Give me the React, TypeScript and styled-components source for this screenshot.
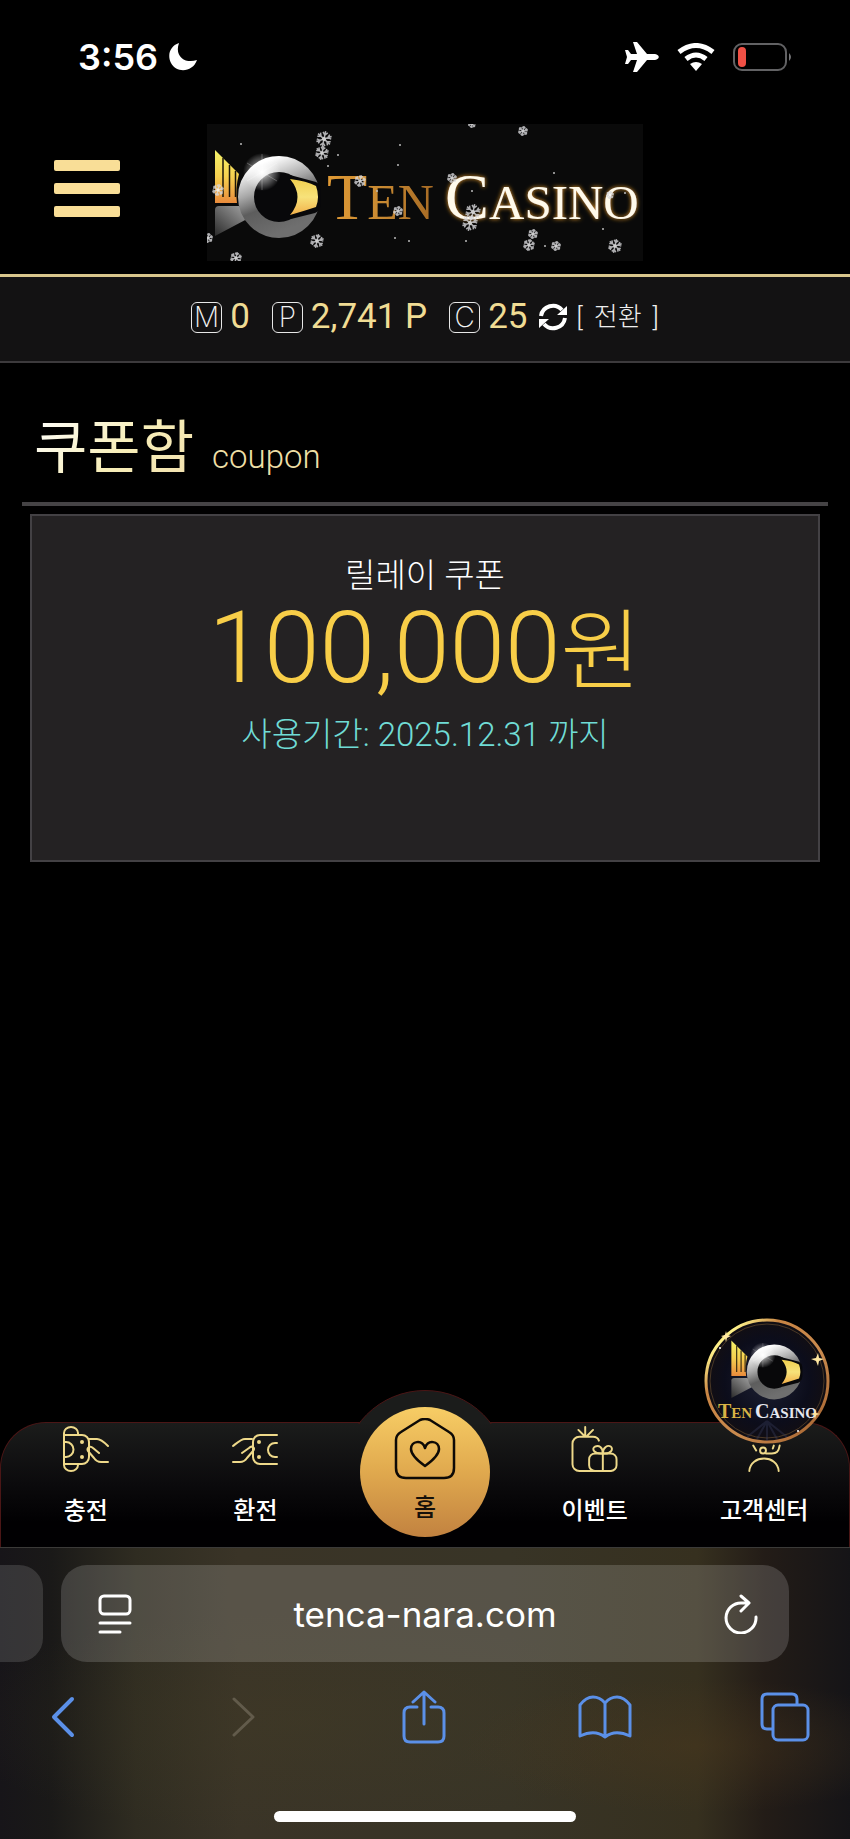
import React from "react";
import styled, { createGlobalStyle } from "styled-components";

const GlobalStyle = createGlobalStyle`
  *, *::before, *::after { box-sizing: border-box; }
  body {
    margin: 0;
    background: #000;
    color: #fff;
    font-family: Roboto, "Noto Sans CJK KR", sans-serif;
  }
  button, input { font: inherit; color: inherit; }
  svg { display: block; }
`;

const GOLD = "#eed98a";
const BLUE = "#5b90e8";

const Screen = styled.div`
  display: flex;
  flex-direction: column;
  min-height: 100vh;
  overflow: hidden;
`;

const StatusBar = styled.div`
  display: flex;
  align-items: center;
  justify-content: space-between;
  height: 114px;
  padding: 0 57px 0 78px;
  font: 600 36px/40px Inter, sans-serif;
`;

const StatusGroup = styled.div<{ $gap: number }>`
  display: flex;
  align-items: center;
  gap: ${(p) => p.$gap}px;
`;

const Header = styled.header`
  display: grid;
  grid-template-columns: 1fr auto 1fr;
  align-items: center;
  padding: 10px 54px 13px;
  border-bottom: 3px solid #d8c58c;
`;

const BareButton = styled.button`
  display: flex;
  align-items: center;
  justify-content: center;
  padding: 0;
  border: 0;
  background: none;
  cursor: pointer;
`;

const MenuButton = styled(BareButton)`
  flex-direction: column;
  gap: 12px;
  width: 66px;
  padding-bottom: 8px;
`;

const MenuBar = styled.span`
  width: 100%;
  height: 11px;
  border-radius: 2px;
  background: #f9de97;
`;

const LogoLink = styled.a`
  display: block;
  background: #0a0a0a;
`;

const Wallet = styled.section`
  display: flex;
  align-items: center;
  justify-content: center;
  height: 86px;
  padding-bottom: 4px;
  background: #131213;
  border-bottom: 2px solid #3c3a3c;
`;

const Balance = styled.div`
  display: flex;
  align-items: center;
  gap: 8px;
  margin-right: 22px;
  color: #f0dc94;
  font-size: 35px;
  line-height: 40px;
  &:last-of-type { margin-right: 11px; }
`;

const Mark = styled.span`
  display: flex;
  align-items: center;
  justify-content: center;
  width: 31px;
  height: 31px;
  border: 1px solid #e8e8e8;
  border-radius: 6px;
  color: #f4f4f4;
  font: 200 28px/28px Inter, sans-serif;
`;

const Exchange = styled(BareButton)`
  gap: 11px;
  margin-left: 10px;
  color: #eee;
  font-size: 26px;
  font-weight: 300;
  line-height: 32px;
`;

const Content = styled.main`
  flex: 1;
  padding: 51px 22px 0;
`;

const Title = styled.h1`
  display: flex;
  align-items: baseline;
  gap: 18px;
  margin: 0;
  padding: 0 12px 11px;
  border-bottom: 4px solid #454345;
  font-size: 58px;
  font-weight: 400;
  line-height: 68px;
`;

const GoldText = styled.span`
  background: linear-gradient(135deg, #ffffff 0%, #f7eeb8 55%, #f2e0ae 100%);
  background-clip: text;
  color: transparent;
`;

const Subtitle = styled.span`
  color: #eedfa6;
  font-size: 33px;
  font-weight: 300;
`;

const CouponCard = styled.article`
  display: flex;
  flex-direction: column;
  align-items: center;
  min-height: 348px;
  margin: 8px 8px 0;
  padding-top: 40px;
  border: 2px solid #434144;
  background: #242223;
  font-weight: 300;
`;

const CouponName = styled.h2`
  margin: 0;
  font-size: 33px;
  font-weight: 300;
  line-height: 40px;
`;

const Amount = styled.p`
  margin: 0;
  color: #f8ce48;
  font-size: 100px;
  font-weight: 300;
  line-height: 104px;
`;

const Won = styled.span`
  font-size: 88px;
`;

const Period = styled.p`
  margin: 11px 0 0;
  color: #70dcd5;
  font-size: 33px;
  line-height: 40px;
`;

const BottomNav = styled.nav`
  position: relative;
  display: grid;
  grid-template-columns: repeat(5, 1fr);
  height: 125px;
  border: 1px solid #4b1616;
  border-bottom: 0;
  border-radius: 46px 46px 0 0;
  background: linear-gradient(#1b1c1b, #0b0a0c 50%, #010002 80%);

  &::before {
    content: "";
    position: absolute;
    top: -33px;
    left: calc(50% - 83px);
    width: 166px;
    height: 166px;
    border: 1px solid #4b1616;
    border-radius: 50%;
    background: #1b1c1b;
    clip-path: inset(0 0 132px 0);
  }
`;

const NavLink = styled.a`
  display: flex;
  flex-direction: column;
  align-items: center;
  gap: 23px;
  padding-top: 3px;
  color: #fff;
  font-size: 24px;
  font-weight: 500;
  line-height: 32px;
  text-decoration: none;
`;

const HomeLink = styled(NavLink)`
  position: relative;
  justify-self: center;
  gap: 12px;
  width: 130px;
  height: 130px;
  margin-top: -16px;
  padding-top: 11px;
  border-radius: 50%;
  background: linear-gradient(#f7cd65, #e0a94e 50%, #c28240);
  color: #15100a;
`;

const ChatLink = styled.a`
  position: absolute;
  right: 18px;
  bottom: 102px;
`;

const Browser = styled.footer`
  display: flex;
  flex-direction: column;
  align-items: center;
  height: 292px;
  border-top: 1px solid #3b3a38;
  background:
    radial-gradient(ellipse at 82% 68%, #4a381d80, transparent 24%),
    radial-gradient(ellipse at 35% 60%, #453e2550, transparent 45%),
    linear-gradient(90deg, #171519, #1a1918 6%, #2f2c21 16%, #3a3427 28%, #383426 60%, #36301f 82%, #231c17 90%, #151417);
`;

const TabStrip = styled.div`
  display: flex;
  gap: 18px;
  width: 100%;
  height: 97px;
  margin-top: 17px;
  padding-right: 61px;
`;

const TabEdge = styled.div`
  width: 43px;
  border-radius: 0 24px 24px 0;
  background: #ffffff22;
`;

const AddressBar = styled.div`
  display: flex;
  flex: 1;
  align-items: center;
  padding: 0 31px 0 37px;
  border-radius: 26px;
  background: #ffffff28;
`;

const AddressInput = styled.input`
  flex: 1;
  min-width: 0;
  padding: 0 6px 0 0;
  border: 0;
  background: none;
  outline: 0;
  font: 400 35px/40px Inter, sans-serif;
  text-align: center;
`;

const Toolbar = styled.div`
  display: flex;
  align-items: center;
  justify-content: space-between;
  width: 100%;
  margin-top: 28px;
  padding: 0 38px 0 36px;
`;

const ToolButton = styled(BareButton)`
  width: 54px;
`;

const HomeIndicator = styled.div`
  width: 302px;
  height: 11px;
  margin: auto 0 17px;
  border-radius: 6px;
  background: #fff;
`;

const flakes = [
  [117, 15, 8], [115, 29, 7], [153, 57, 6], [191, 87, 5], [266, 88, 8], [263, 99, 8],
  [316, 7, 5], [110, 117, 7], [29, 134, 6], [11, 66, 6], [245, 54, 5], [403, 71, 4],
  [326, 110, 5], [322, 121, 6], [349, 122, 5], [408, 122, 7], [265, 0, 4], [1, 114, 5],
];
const sparks = [
  [34, 20], [193, 21], [191, 41], [121, 42], [131, 31], [98, 44], [265, 67], [347, 49],
  [396, 105], [259, 117], [188, 114], [202, 117], [338, 122], [418, 69], [170, 67],
];

const Flake = ({ x, y, r }: { x: number; y: number; r: number }) => (
  <g transform={`translate(${x} ${y}) rotate(12)`} stroke="#d9d9dc" strokeWidth="1.5" opacity=".8">
    {[0, 60, 120].map((a) => (
      <path key={a} transform={`rotate(${a})`}
        d={`M0 ${-r}V${r}M${-r * 0.3} ${-r * 0.85}L0 ${-r * 0.5}L${r * 0.3} ${-r * 0.85}M${-r * 0.3} ${r * 0.85}L0 ${r * 0.5}L${r * 0.3} ${r * 0.85}`} fill="none" />
    ))}
    <circle r={r * 0.25} fill="#fff" stroke="none" />
  </g>
);

const Emblem = ({ id }: { id: string }) => (
  <g>
    <defs>
      <linearGradient id={`${id}-ring`} x1=".2" y1="0" x2=".6" y2="1">
        <stop offset="0" stopColor="#fff" />
        <stop offset=".35" stopColor="#a9a9a9" />
        <stop offset=".6" stopColor="#5d5d5d" />
        <stop offset="1" stopColor="#6f6f6f" />
      </linearGradient>
      <linearGradient id={`${id}-wing`} x1="0" y1="0" x2="0" y2="1">
        <stop offset="0" stopColor="#f3f26a" />
        <stop offset=".5" stopColor="#f6d04f" />
        <stop offset="1" stopColor="#e98b3c" />
      </linearGradient>
      <linearGradient id={`${id}-tail`} x1="0" y1="1" x2="1" y2="0">
        <stop offset="0" stopColor="#2b2b2b" />
        <stop offset="1" stopColor="#a8a8a8" />
      </linearGradient>
      <linearGradient id={`${id}-eye`} x1="0" y1="0" x2="0" y2="1">
        <stop offset="0" stopColor="#f0cf4f" />
        <stop offset=".5" stopColor="#f7e27a" />
        <stop offset="1" stopColor="#f2b04a" />
      </linearGradient>
      <radialGradient id={`${id}-glow`}>
        <stop offset="0" stopColor="#fff" />
        <stop offset=".4" stopColor="#fff" stopOpacity=".5" />
        <stop offset="1" stopColor="#fff" stopOpacity="0" />
      </radialGradient>
    </defs>
    <path d="M8 112V86q0-4 4-4h20l10 12z" fill={`url(#${id}-tail)`} />
    <path d="M8 26L32 50Q28 64 30 79H8z" fill={`url(#${id}-wing)`} />
    <path d="M16 34V73M22.5 41V73M28.5 47V73" stroke="#191408" strokeWidth="1.5" />
    <circle cx="72" cy="73" r="33" fill="#08080a" stroke={`url(#${id}-ring)`} strokeWidth="16" />
    <path d="M83 51L109 58Q113 60 114 66V80Q113 87 108 89L84 95Q94 73 83 51" fill="#08080a" />
    <path d="M83 55Q100 57 109 62Q113 73 109 83Q97 87 83 91Q98 73 83 55" fill={`url(#${id}-eye)`} />
    <circle cx="55" cy="48" r="19" fill={`url(#${id}-glow)`} />
    <path d="M55 30V66M40 39L70 57M40 57L70 39" stroke="#fff" strokeWidth="1" opacity=".25" />
  </g>
);

const Logo = () => (
  <svg width="436" height="137" viewBox="0 0 436 137" role="img" aria-label="Ten Casino">
    <defs>
      <linearGradient id="ten" x1="0" x2="1">
        <stop offset="0" stopColor="#e09a35" />
        <stop offset=".5" stopColor="#c98a32" />
        <stop offset="1" stopColor="#a66a24" />
      </linearGradient>
      <filter id="halo" x="-10%" y="-20%" width="120%" height="140%">
        <feDropShadow dx="0" dy="0" stdDeviation="2" floodColor="#f0a025" floodOpacity="1" />
      </filter>
    </defs>
    <Emblem id="top" />
    <g fontFamily="'Liberation Serif', serif">
      <text x="120" y="95" fill="url(#ten)" fontSize="50"><tspan fontSize="66">T</tspan>EN</text>
      <text x="238" y="95" fill="#fffaea" filter="url(#halo)" fontSize="49"><tspan fontSize="66">C</tspan>ASINO</text>
    </g>
    {flakes.map(([x, y, r]) => <Flake key={`${x}-${y}`} x={x} y={y} r={r} />)}
    {sparks.map(([x, y]) => <circle key={`${x}-${y}`} cx={x} cy={y} r="1" fill="#bbb" />)}
  </svg>
);

const ChatBadge = () => (
  <svg width="128" height="128" viewBox="0 0 128 128" role="img" aria-label="Ten Casino">
    <defs>
      <linearGradient id="rim" x1="0" y1="0" x2="1" y2="1">
        <stop offset="0" stopColor="#b87836" />
        <stop offset=".15" stopColor="#fff28a" />
        <stop offset=".3" stopColor="#c98544" />
        <stop offset=".6" stopColor="#c98a4e" />
        <stop offset="1" stopColor="#a05e2c" />
      </linearGradient>
      <radialGradient id="disc">
        <stop offset="0" stopColor="#1d2033" />
        <stop offset=".7" stopColor="#0c0d1b" />
        <stop offset="1" stopColor="#120e12" />
      </radialGradient>
    </defs>
    <circle cx="64" cy="64" r="61" fill="url(#disc)" stroke="url(#rim)" strokeWidth="3" />
    <circle cx="64" cy="64" r="57" fill="none" stroke="#4a3826" strokeWidth="1" />
    <path d="M64 104L44 120M64 104V124M64 104L84 120M64 104L54 122M64 104L74 122" stroke="#43496d" strokeWidth="2" opacity=".3" />
    <g transform="translate(23 6) scale(.67)"><Emblem id="chat" /></g>
    <g fontFamily="'Liberation Serif', serif" fontWeight="700" fontSize="15">
      <text x="15" y="101" fill="#d9b445"><tspan fontSize="20">T</tspan>EN</text>
      <text x="52" y="101" fill="#e6e7ef"><tspan fontSize="20">C</tspan>ASINO</text>
    </g>
    <path d="M115 36l1 5 5 1-5 2-1 5-2-5-5-2 5-1zM23 14l1 4 4 1-4 2-1 4-1-4-4-2 4-1zM112 92l1 4 4 1-4 1-1 4-1-4-4-1 4-1z" fill="#ffe7a0" />
    <circle cx="95" cy="114" r="1" fill="#fff" />
    <circle cx="17" cy="31" r="1" fill="#fff" />
  </svg>
);

const Line = styled.svg.attrs({ fill: "none", strokeLinecap: "round", strokeLinejoin: "round", "aria-hidden": true })`
  flex: none;
`;

const DepositIcon = () => (
  <Line width="46" height="46" stroke={GOLD} strokeWidth="2">
    <path d="M15 9V7A7 6 0 0 0 1 7V39A7 6 0 0 0 15 39V38M1 9H19a7 7 0 0 1 7 7V31a7 7 0 0 1-7 7H1M1 16H3a7 7 0 0 1 0 15H1" />
    <path d="M26 13h8c4 0 7 3 11 7M36 27l-6-5c-3-3-7 0-5 3l6 7c2 3 4 4 7 4h7" />
    <path d="M19 16h0M19 31h0" strokeWidth="4" />
  </Line>
);

const WithdrawIcon = () => (
  <Line width="46" height="46" stroke={GOLD} strokeWidth="2">
    <path d="M45 9H28a7 7 0 0 0-7 7V31a7 7 0 0 0 7 7H45M45 17H43a7 7 0 0 0 0 14H45" />
    <path d="M20 13h-7c-4 0-7 3-12 7M10 27l7-5c3-3 7 0 4 3l-6 7c-2 3-4 4-7 4H1" />
    <path d="M27 16h0M27 31h0" strokeWidth="4" />
  </Line>
);

const EventIcon = () => (
  <Line width="48" height="46" viewBox="0 0 48 47" stroke={GOLD} strokeWidth="2">
    <path d="M28 15C27 12 25 11 22 11H8a7 7 0 0 0-7 7V39a7 7 0 0 0 7 7H40M14 1V10M7 4L13 10M22 4L16 10" />
    <rect x="18" y="28" width="28" height="18" rx="6" />
    <path d="M32 28V46M32 28C23 29 20 23 24 21S32 22 32 28C32 22 37 19 40 21S41 29 32 28" />
  </Line>
);

const SupportIcon = () => (
  <Line width="46" height="46" viewBox="0 0 46 47" stroke={GOLD} strokeWidth="2">
    <path d="M8 46C9 29 37 29 38 46M12 20l3 5M25 28h6c5 0 7-2 8-8M33 20l-1 3M9 14a14 12 0 0 1 28 0" />
    <circle cx="22" cy="25" r="3" />
  </Line>
);

const HouseIcon = () => (
  <Line width="62" height="62" viewBox="0 0 62 62" stroke="#0e0a06" strokeWidth="2.5">
    <path d="M26 2Q31 0 36 2L55 14Q60 17 60 22V50Q60 60 50 60H12Q2 60 2 50V22Q2 17 7 14Z" />
    <path d="M31 48C24 43 17 37 17 31C17 23 28 21 31 30C34 21 45 23 45 31C45 37 38 43 31 48Z" />
  </Line>
);

const MoonIcon = () => (
  <svg width="30" height="30" viewBox="0 0 30 30" aria-hidden="true">
    <path d="M11 1C2 4-1 13 3 21C9 32 25 30 29 18C18 22 6 15 11 1Z" fill="#fff" />
  </svg>
);

const PlaneIcon = () => (
  <svg width="34" height="30" viewBox="0 0 34 30" aria-hidden="true">
    <path d="M8 0h4l10 12h8c5 1 5 5 0 6h-8L12 30H8l4-12H6l-3 4H0l2-7L0 8h3l3 4h6z" fill="#fff" />
  </svg>
);

const WifiIcon = () => (
  <svg width="38" height="28" viewBox="0 0 38 28" aria-hidden="true">
    <g fill="none" stroke="#fff" strokeWidth="5">
      <path d="M2 9Q19-4 36 9M9 16Q19 8 29 16" />
    </g>
    <path d="M13 21Q19 17 25 21L19 28Z" fill="#fff" />
  </svg>
);

const BatteryIcon = () => (
  <svg width="60" height="28" viewBox="0 0 60 28" aria-hidden="true">
    <rect x="1" y="1" width="52" height="26" rx="8" fill="none" stroke="#626264" strokeWidth="2" />
    <rect x="5" y="4" width="8" height="20" rx="4" fill="#f05045" />
    <path d="M56 10q4 4 0 8z" fill="#767678" />
  </svg>
);

const SyncIcon = () => (
  <svg width="28" height="28" viewBox="0 0 28 28" aria-hidden="true">
    <path d="M2 13A12 12 0 0 1 23 7M26 15A12 12 0 0 1 5 21" fill="none" stroke="#fff" strokeWidth="4" />
    <path d="M28 3V12H18zM0 25V16H10z" fill="#fff" />
  </svg>
);

const navLabels = { deposit: "충전", withdraw: "환전", home: "홈", event: "이벤트", support: "고객센터" };

export default function App() {
  return (
    <Screen>
      <GlobalStyle />
      <StatusBar>
        <StatusGroup $gap={10}>3:56<MoonIcon /></StatusGroup>
        <StatusGroup $gap={18}><PlaneIcon /><WifiIcon /><BatteryIcon /></StatusGroup>
      </StatusBar>
      <Header>
        <MenuButton type="button" aria-label="메뉴"><MenuBar /><MenuBar /><MenuBar /></MenuButton>
        <LogoLink href="#"><Logo /></LogoLink>
      </Header>
      <Wallet>
        <Balance><Mark>M</Mark>0</Balance>
        <Balance><Mark>P</Mark>2,741 P</Balance>
        <Balance><Mark>C</Mark>25</Balance>
        <BareButton type="button" aria-label="새로고침"><SyncIcon /></BareButton>
        <Exchange type="button"><span>[</span><span>전환</span><span>]</span></Exchange>
      </Wallet>
      <Content>
        <Title><GoldText>쿠폰함</GoldText><Subtitle>coupon</Subtitle></Title>
        <CouponCard>
          <CouponName>릴레이 쿠폰</CouponName>
          <Amount>100,000<Won>원</Won></Amount>
          <Period>사용기간: 2025.12.31 까지</Period>
        </CouponCard>
      </Content>
      <BottomNav>
        <NavLink href="#"><DepositIcon />{navLabels.deposit}</NavLink>
        <NavLink href="#"><WithdrawIcon />{navLabels.withdraw}</NavLink>
        <HomeLink href="#"><HouseIcon />{navLabels.home}</HomeLink>
        <NavLink href="#"><EventIcon />{navLabels.event}</NavLink>
        <NavLink href="#"><SupportIcon />{navLabels.support}</NavLink>
        <ChatLink href="#"><ChatBadge /></ChatLink>
      </BottomNav>
      <Browser>
        <TabStrip>
          <TabEdge />
          <AddressBar>
            <BareButton type="button" aria-label="페이지 메뉴">
              <Line width="34" height="40" stroke="#fff" strokeWidth="3">
                <rect x="2" y="2" width="30" height="18" rx="4" />
                <path d="M2 29H32M2 38H22" />
              </Line>
            </BareButton>
            <AddressInput aria-label="주소" defaultValue="tenca-nara.com" />
            <BareButton type="button" aria-label="다시 불러오기">
              <Line width="34" height="40" stroke="#fff" strokeWidth="3">
                <path d="M17 2L25 9L17 17M24 9H18A15 15 0 1 0 32 23" />
              </Line>
            </BareButton>
          </AddressBar>
        </TabStrip>
        <Toolbar>
          <ToolButton type="button" aria-label="뒤로">
            <Line width="24" height="42" stroke={BLUE} strokeWidth="4"><path d="M21 3L3 21L21 39" /></Line>
          </ToolButton>
          <ToolButton type="button" aria-label="앞으로" disabled>
            <Line width="24" height="42" stroke="#625b4b" strokeWidth="3"><path d="M2 3L21 21L2 39" /></Line>
          </ToolButton>
          <ToolButton type="button" aria-label="공유">
            <Line width="44" height="54" stroke={BLUE} strokeWidth="3">
              <path d="M15 17H8Q2 17 2 23V46Q2 52 8 52H36Q42 52 42 46V23Q42 17 36 17H29M22 34V2M11 12L22 2L33 12" />
            </Line>
          </ToolButton>
          <ToolButton type="button" aria-label="책갈피">
            <Line width="54" height="44" stroke={BLUE} strokeWidth="3">
              <path d="M27 42Q17 34 2 41V10Q8 2 15 2T27 8Q32 2 39 2T52 10V41Q37 34 27 42V8" />
            </Line>
          </ToolButton>
          <ToolButton type="button" aria-label="탭">
            <Line width="50" height="50" stroke={BLUE} strokeWidth="3">
              <rect x="13" y="13" width="35" height="35" rx="5" />
              <path d="M12 37H7Q2 37 2 32V7Q2 2 7 2H32Q37 2 37 7V12" />
            </Line>
          </ToolButton>
        </Toolbar>
        <HomeIndicator />
      </Browser>
    </Screen>
  );
}
